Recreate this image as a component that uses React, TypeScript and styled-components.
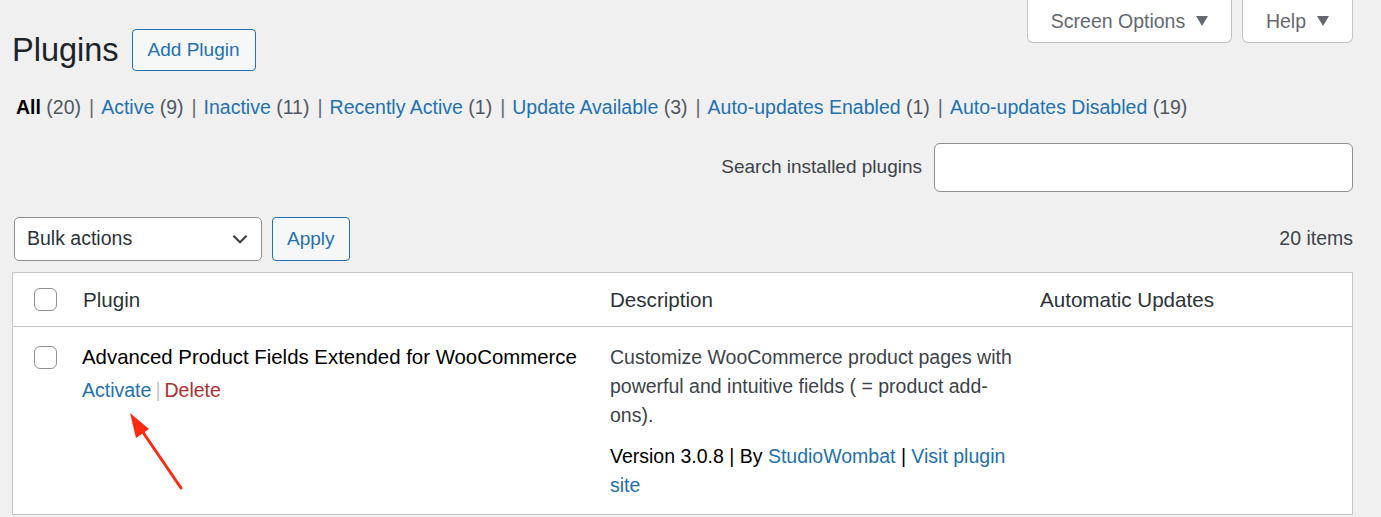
import React from "react";
import styled, { createGlobalStyle } from "styled-components";

const GlobalStyle = createGlobalStyle`
    html, body {
        margin: 0;
        padding: 0;
        background: #f0f0f1;
    }
    body {
        font-family: "Liberation Sans", Arial, sans-serif;
        font-size: 19.5px;
        line-height: 1.5;
        color: #3c434a;
    }
`;

const Wrap = styled.div`
    position: relative;
    padding: 0 28px 0 12px;
    height: 517px;
    overflow: hidden;
`;

const TopBar = styled.div`
    display: flex;
    justify-content: space-between;
    align-items: flex-start;
`;

const TitleGroup = styled.div`
    display: flex;
    align-items: center;
    gap: 13px;
    margin-top: 29px;
`;

const H1 = styled.h1`
    margin: 0;
    font-size: 32.5px;
    font-weight: 400;
    line-height: 42px;
    color: #1d2327;
`;

const OutlineButton = styled.button`
    height: 42px;
    padding: 0 15px;
    border: 1px solid #2271b1;
    border-radius: 4px;
    background: #f6f7f7;
    color: #2271b1;
    font: inherit;
    font-size: 19px;
    cursor: pointer;
`;

const MetaLinks = styled.div`
    display: flex;
    gap: 10px;
`;

const MetaTab = styled.button<{ $w: number }>`
    width: ${(p) => p.$w}px;
    height: 43px;
    border: 1px solid #c3c4c7;
    border-top: none;
    border-radius: 0 0 6px 6px;
    background: #fff;
    color: #646970;
    font: inherit;
    font-size: 19.5px;
    display: flex;
    align-items: center;
    justify-content: center;
    gap: 11px;
    padding: 2px 0 0;

    &::after {
        content: "";
        border-left: 6px solid transparent;
        border-right: 6px solid transparent;
        border-top: 10px solid #646970;
        margin-top: -2px;
    }
`;

const Filters = styled.ul`
    list-style: none;
    margin: 22px 0 0 4px;
    padding: 0;
    display: flex;
    flex-wrap: wrap;
    line-height: 29px;
    color: #646970;
`;

const Filter = styled.li`
    &:not(:last-child)::after {
        content: "|";
        color: #646970;
        margin: 0 7px 0 8px;
    }
`;

const FilterLink = styled.a<{ $current?: boolean }>`
    color: ${(p) => (p.$current ? "#000" : "#2271b1")};
    font-weight: ${(p) => (p.$current ? 700 : 400)};
    text-decoration: none;
`;

const Count = styled.span`
    color: #50575e;
`;

const SearchRow = styled.div`
    display: flex;
    justify-content: flex-end;
    align-items: center;
    gap: 12px;
    margin-top: 21px;
`;

const SearchLabel = styled.label`
    color: #3c434a;
    font-size: 19px;
`;

const SearchInput = styled.input`
    width: 419px;
    height: 49px;
    box-sizing: border-box;
    border: 1px solid #8c8f94;
    border-radius: 6px;
    background: #fff;
    font: inherit;
`;

const TableNav = styled.div`
    display: flex;
    align-items: center;
    gap: 10px;
    margin: 25px 0 11px 2px;
`;

const Select = styled.div`
    width: 248px;
    height: 44px;
    box-sizing: border-box;
    border: 1px solid #8c8f94;
    border-radius: 5px;
    background: #fff;
    color: #2c3338;
    display: flex;
    align-items: center;
    justify-content: space-between;
    padding: 0 10px 0 12px;
`;

const ApplyButton = styled(OutlineButton)`
    height: 44px;
    padding: 0 14px;
`;

const ItemCount = styled.span`
    margin-left: auto;
    color: #3c434a;
`;

const Table = styled.div`
    background: #fff;
    border: 1px solid #c3c4c7;
    display: grid;
    grid-template-columns: 57px 527px 430px 1fr;
`;

const HeadCell = styled.div`
    box-sizing: border-box;
    height: 54px;
    display: flex;
    align-items: center;
    padding: 1px 13px 0;
    color: #2c3338;
    font-size: 20.6px;
    border-bottom: 1px solid #c3c4c7;
`;

const CheckCell = styled.div<{ $head?: boolean }>`
    box-sizing: border-box;
    display: flex;
    align-items: ${(p) => (p.$head ? "center" : "flex-start")};
    padding-left: 21px;
    padding-top: ${(p) => (p.$head ? 0 : 19)}px;
    height: ${(p) => (p.$head ? "54px" : "auto")};
    border-bottom: ${(p) => (p.$head ? "1px solid #c3c4c7" : "none")};
`;

const Checkbox = styled.span`
    width: 23px;
    height: 23px;
    box-sizing: border-box;
    border: 1px solid #8c8f94;
    border-radius: 6px;
    background: #fff;
`;

const Cell = styled.div`
    padding: 16px 13px 14px;
    line-height: 29px;
`;

const PluginTitle = styled.div`
    color: #000;
    font-size: 20.4px;
    margin-left: -1px;
`;

const RowActions = styled.div`
    margin-top: 4px;
    margin-left: -1px;
    color: #a7aaad;
`;

const ActionLink = styled.a<{ $danger?: boolean }>`
    color: ${(p) => (p.$danger ? "#b32d2e" : "#2271b1")};
    text-decoration: none;
`;

const Sep = styled.span`
    color: #c3c4c7;
    margin: 0 4px;
`;

const Desc = styled.p`
    margin: 0;
    color: #3c434a;
`;

const Meta = styled.div`
    margin-top: 12px;
    color: #000;
`;

const Link = styled.a`
    color: #2271b1;
    text-decoration: none;
`;

const Arrow = styled.svg`
    position: absolute;
    left: 120px;
    top: 405px;
`;

const filters = [
    { label: "All", count: 20, current: true },
    { label: "Active", count: 9 },
    { label: "Inactive", count: 11 },
    { label: "Recently Active", count: 1 },
    { label: "Update Available", count: 3 },
    { label: "Auto-updates Enabled", count: 1 },
    { label: "Auto-updates Disabled", count: 19 },
];

function App() {
    return (
        <Wrap>
            <GlobalStyle />
            <TopBar>
                <TitleGroup>
                    <H1>Plugins</H1>
                    <OutlineButton>Add Plugin</OutlineButton>
                </TitleGroup>
                <MetaLinks>
                    <MetaTab $w={205}>Screen Options</MetaTab>
                    <MetaTab $w={111}>Help</MetaTab>
                </MetaLinks>
            </TopBar>

            <Filters>
                {filters.map((f) => (
                    <Filter key={f.label}>
                        <FilterLink $current={f.current} href="#">
                            {f.label}
                        </FilterLink>{" "}
                        <Count>({f.count})</Count>
                    </Filter>
                ))}
            </Filters>

            <SearchRow>
                <SearchLabel htmlFor="plugin-search">
                    Search installed plugins
                </SearchLabel>
                <SearchInput id="plugin-search" type="search" />
            </SearchRow>

            <TableNav>
                <Select>
                    Bulk actions
                    <svg width="22" height="22" viewBox="0 0 20 20">
                        <path
                            d="M4 7l6 6 6-6"
                            fill="none"
                            stroke="#3c434a"
                            strokeWidth="2"
                        />
                    </svg>
                </Select>
                <ApplyButton>Apply</ApplyButton>
                <ItemCount>20 items</ItemCount>
            </TableNav>

            <Table>
                <CheckCell $head>
                    <Checkbox />
                </CheckCell>
                <HeadCell>Plugin</HeadCell>
                <HeadCell>Description</HeadCell>
                <HeadCell>Automatic Updates</HeadCell>

                <CheckCell>
                    <Checkbox />
                </CheckCell>
                <Cell>
                    <PluginTitle>
                        Advanced Product Fields Extended for WooCommerce
                    </PluginTitle>
                    <RowActions>
                        <ActionLink href="#">Activate</ActionLink>
                        <Sep>|</Sep>
                        <ActionLink $danger href="#">
                            Delete
                        </ActionLink>
                    </RowActions>
                </Cell>
                <Cell>
                    <Desc>
                        Customize WooCommerce product pages with powerful and
                        intuitive fields ( = product add-ons).
                    </Desc>
                    <Meta>
                        Version 3.0.8 | By <Link href="#">StudioWombat</Link>{" "}
                        | <Link href="#">Visit plugin site</Link>
                    </Meta>
                </Cell>
                <Cell />
            </Table>

            <Arrow width="70" height="90" viewBox="0 0 70 90">
                <line
                    x1="61"
                    y1="83"
                    x2="18"
                    y2="20"
                    stroke="#ff2a12"
                    strokeWidth="3"
                    strokeLinecap="round"
                />
                <polygon points="10,8 29,24 16,33" fill="#ff2a12" />
            </Arrow>
        </Wrap>
    );
}

export default App;
